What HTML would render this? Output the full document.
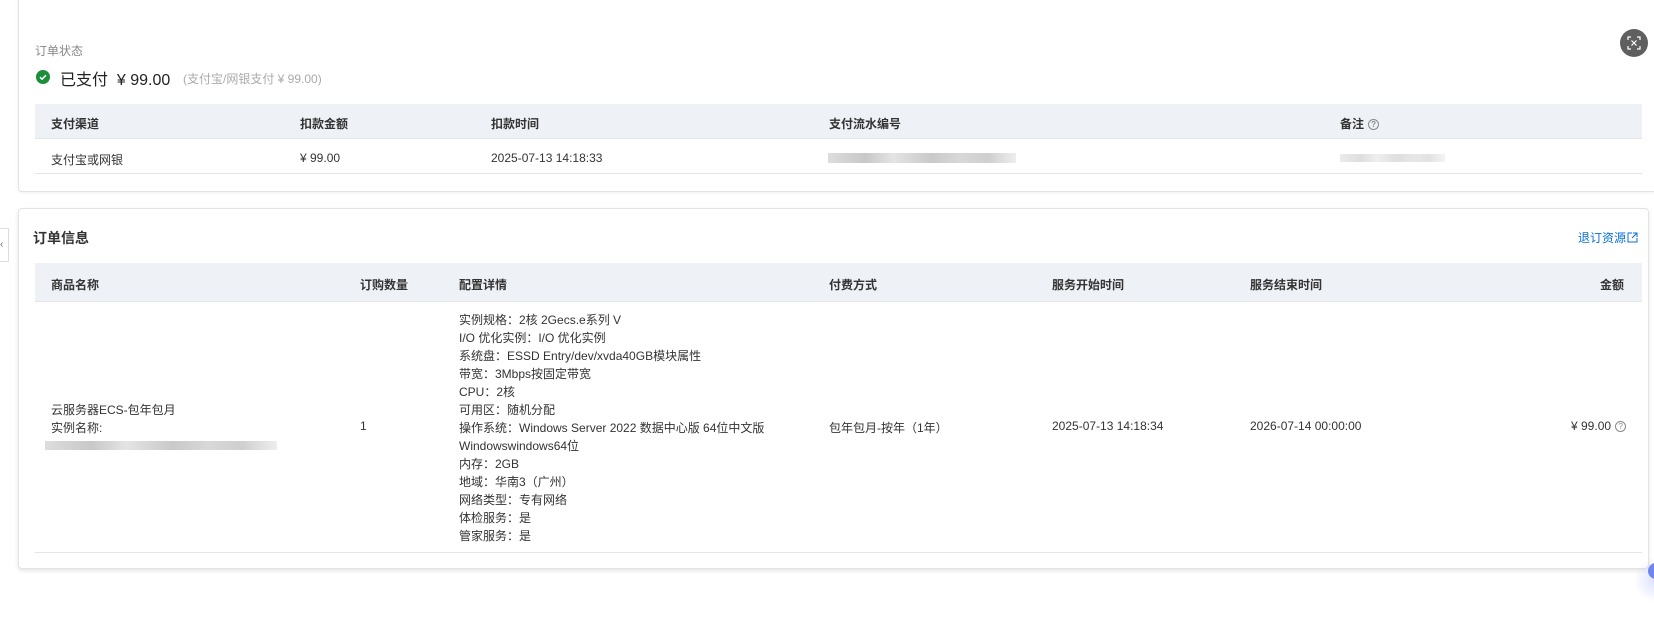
<!DOCTYPE html>
<html><head><meta charset="utf-8"><style>
*{margin:0;padding:0;box-sizing:border-box}
body{width:1654px;height:637px;background:#fff;position:relative;overflow:hidden;font-family:"Liberation Sans","Noto Sans CJK SC",sans-serif;font-size:12px;color:#333}
.a{position:absolute;white-space:nowrap}
.card{position:absolute;border:1px solid #e3e3e3;border-radius:4px;background:#fff}
.hd{position:absolute;background:#eef1f6;border-bottom:1px solid #e3e5e8}
.b{font-weight:bold;color:#333}
.line{position:absolute;height:1px;background:#e5e5e5}
.blur{position:absolute;height:10px;background:linear-gradient(90deg,#ddd,#c8c8c8 20%,#e4e4e4 35%,#c9c9c9 55%,#d8d8d8 70%,#cfcfcf 85%,#eee)}
.q{display:inline-block;width:11px;height:11px;border:1px solid #888;border-radius:50%;font-size:8px;line-height:9px;text-align:center;color:#888;vertical-align:middle;margin-left:4px}
</style></head><body>
<div class="card" style="left:18px;top:-10px;width:1640px;height:202px;box-shadow:0 1px 3px rgba(0,0,0,.06)"></div>
<div class="a" style="left:35px;top:42px;color:#888;font-size:12px">订单状态</div>
<div class="a" style="left:36px;top:70px;width:14px;height:14px;border-radius:50%;background:#1a8e3b"></div>
<svg class="a" style="left:36px;top:70px" width="14" height="14"><path d="M4 7.2l2 2 4-4" stroke="#fff" stroke-width="1.5" fill="none"/></svg>
<div class="a" style="left:60px;top:66px;font-size:16px;color:#222">已支付 &nbsp;¥ <span style="font-size:16px">99.00</span></div>
<div class="a" style="left:183px;top:70px;color:#aaa;font-size:12px">(支付宝/网银支付 ¥ 99.00)</div>

<div class="hd" style="left:35px;top:104px;width:1607px;height:35px"></div>
<div class="a b" style="left:51px;top:115px">支付渠道</div>
<div class="a b" style="left:300px;top:115px">扣款金额</div>
<div class="a b" style="left:491px;top:115px">扣款时间</div>
<div class="a b" style="left:829px;top:115px">支付流水编号</div>
<div class="a b" style="left:1340px;top:115px">备注<span class="q">?</span></div>
<div class="a" style="left:51px;top:151px">支付宝或网银</div>
<div class="a" style="left:300px;top:151px">¥ 99.00</div>
<div class="a" style="left:491px;top:151px">2025-07-13 14:18:33</div>
<div class="blur" style="left:828px;top:153px;width:188px"></div>
<div class="blur" style="left:1340px;top:154px;width:105px;height:8px;opacity:.6"></div>
<div class="line" style="left:35px;top:173px;width:1607px"></div>

<div class="card" style="left:18px;top:208px;width:1631px;height:361px;box-shadow:0 2px 4px rgba(0,0,0,.1)"></div>
<div class="a" style="left:0;top:228px;width:9px;height:34px;border:1px solid #ddd;border-left:none;background:#fff;font-size:10px;line-height:32px;color:#666">‹</div>
<div class="a b" style="left:33px;top:228px;font-size:14px">订单信息</div>
<div class="a" style="left:1578px;top:229px;color:#0a6fd6;font-size:12px">退订资源<svg width="11" height="11" style="vertical-align:-1px;margin-left:1px"><path d="M5 1H1v9h9V6M6 1h4v4M10 1L5 6" stroke="#0a6fd6" fill="none"/></svg></div>

<div class="hd" style="left:35px;top:263px;width:1607px;height:39px"></div>
<div class="a b" style="left:51px;top:276px">商品名称</div>
<div class="a b" style="left:360px;top:276px">订购数量</div>
<div class="a b" style="left:459px;top:276px">配置详情</div>
<div class="a b" style="left:829px;top:276px">付费方式</div>
<div class="a b" style="left:1052px;top:276px">服务开始时间</div>
<div class="a b" style="left:1250px;top:276px">服务结束时间</div>
<div class="a b" style="left:1600px;top:276px">金额</div>

<div class="a" style="left:51px;top:401px;line-height:18px">云服务器ECS-包年包月<br>实例名称:</div>
<div class="blur" style="left:45px;top:441px;width:232px;height:9px"></div>
<div class="a" style="left:360px;top:419px">1</div>
<div class="a" style="left:459px;top:311px;line-height:18px">实例规格：2核 2Gecs.e系列 V<br>I/O 优化实例：I/O 优化实例<br>系统盘：ESSD Entry/dev/xvda40GB模块属性<br>带宽：3Mbps按固定带宽<br>CPU：2核<br>可用区：随机分配<br>操作系统：Windows Server 2022 数据中心版 64位中文版<br>Windowswindows64位<br>内存：2GB<br>地域：华南3（广州）<br>网络类型：专有网络<br>体检服务：是<br>管家服务：是</div>
<div class="a" style="left:829px;top:419px">包年包月-按年（1年）</div>
<div class="a" style="left:1052px;top:419px">2025-07-13 14:18:34</div>
<div class="a" style="left:1250px;top:419px">2026-07-14 00:00:00</div>
<div class="a" style="left:1571px;top:419px">¥ 99.00<span class="q">?</span></div>
<div class="line" style="left:35px;top:552px;width:1607px"></div>

<div class="a" style="left:1620px;top:29px;width:28px;height:28px;border-radius:50%;background:#5f5f5f"></div>
<svg class="a" style="left:1627px;top:36px" width="14" height="14"><path d="M1 4V1h3M10 1h3v3M13 10v3h-3M4 13H1v-3M4.5 4.5l5 5M9.5 4.5l-5 5" stroke="#fff" stroke-width="1.2" fill="none"/></svg>
<div class="a" style="left:1636px;top:555px;width:40px;height:50px;background:radial-gradient(circle at 20px 25px,rgba(120,130,255,.25),rgba(255,255,255,0) 70%)"></div>
<div class="a" style="left:1648px;top:563px;width:16px;height:16px;border-radius:50%;background:#6f85f0"></div>
</body></html>
